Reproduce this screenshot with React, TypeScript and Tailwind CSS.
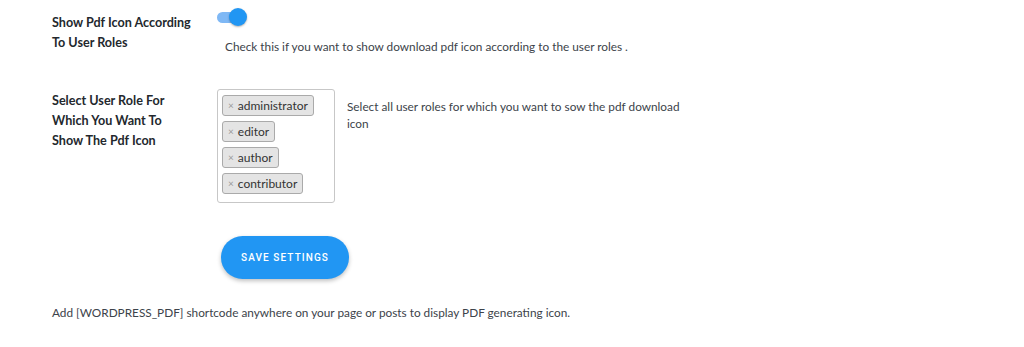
import React from "react";

const roles = ["administrator", "editor", "author", "contributor"];

export default function App() {
  return (
    <div
      className="w-[1024px] h-[347px] bg-white text-[11.8px] text-[#3c434a] overflow-hidden"
      style={{ fontFamily: "Lato, 'Open Sans', sans-serif" }}
    >
      <div className="pl-[52px] pt-[12px]">
        {/* Row 1 */}
        <div className="flex">
          <div className="w-[165px] pt-[1px] font-bold text-[12.6px] text-[#23282d] leading-[20px]">
            Show Pdf Icon According
            <br />
            To User Roles
          </div>
          <div className="flex flex-col">
            <div className="relative w-[30px] h-[15px] mt-[-2px]">
              <div className="absolute left-0 top-[2px] w-[27px] h-[11px] rounded-full bg-[#7fb8f5]" />
              <div className="absolute left-[12px] top-[-2px] w-[18px] h-[18px] rounded-full bg-[#2196f3] shadow-[0_1px_2px_rgba(0,0,0,0.3)]" />
            </div>
            <div className="pl-[8px] mt-[14px] leading-[16px]">
              Check this if you want to show download pdf icon according to the user roles .
            </div>
          </div>
        </div>

        {/* Row 2 */}
        <div className="flex mt-[34px]">
          <div className="w-[165px] pt-[2px] font-bold text-[12.6px] text-[#23282d] leading-[20px]">
            Select User Role For
            <br />
            Which You Want To
            <br />
            Show The Pdf Icon
          </div>
          <div className="w-[118px] h-[114px] border border-[#c7c7c7] rounded-[3px] px-[4px] pt-[5px] flex flex-col items-start gap-[5px]">
            {roles.map((r) => (
              <div
                key={r}
                className="flex items-center h-[21px] px-[5px] bg-[#e4e4e4] border border-[#aaaaaa] rounded-[3px] text-[#333] text-[12px]"
              >
                <span className="text-[#999] mr-[4px] text-[10px]">×</span>
                {r}
              </div>
            ))}
          </div>
          <div className="ml-[12px] mt-[9px] w-[345px] leading-[17px]">
            Select all user roles for which you want to sow the pdf download
            icon
          </div>
        </div>

        {/* Button */}
        <div className="pl-[169px] mt-[33px]">
          <button
            className="w-[128px] h-[43px] rounded-full bg-[#2196f3] text-white text-[10px] font-medium tracking-[1.1px] shadow-[0_2px_4px_rgba(0,0,0,0.25)]"
            style={{ fontFamily: "Roboto, sans-serif" }}
          >
            SAVE SETTINGS
          </button>
        </div>

        <div className="mt-[25px]">
          Add [WORDPRESS_PDF] shortcode anywhere on your page or posts to display PDF generating icon.
        </div>
      </div>
    </div>
  );
}
